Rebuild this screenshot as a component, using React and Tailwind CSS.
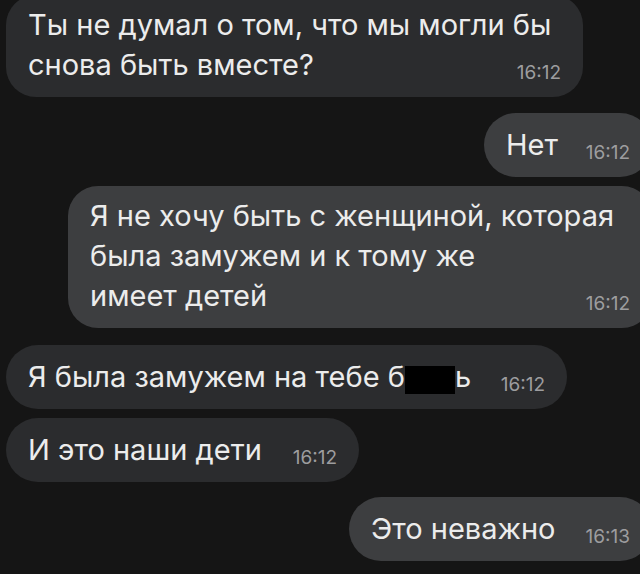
import React from "react";

const font = { fontFamily: "Inter, Roboto, 'Noto Sans', sans-serif" };

function Time({ t }) {
  return (
    <span className="shrink-0 text-[19px] leading-[19px] mb-[3px] text-[#9d9d9f] whitespace-nowrap">
      {t}
    </span>
  );
}

export default function App() {
  return (
    <div
      className="w-[640px] h-[574px] overflow-hidden bg-[#151515] text-[#ececec] text-[29px] leading-[40px] flex flex-col"
      style={font}
    >
      {/* 1 incoming, two lines */}
      <div className="mt-[-5px] ml-[6px] w-[577px] rounded-[30px] bg-[#2b2c2e] pl-[22px] pr-[22px] pt-[10px] pb-[12px] flex flex-col">
        <div className="whitespace-nowrap">Ты не думал о том, что мы могли бы</div>
        <div className="flex items-end justify-between">
          <span className="whitespace-nowrap">снова быть вместе?</span>
          <Time t="16:12" />
        </div>
      </div>

      {/* 2 outgoing */}
      <div className="mt-[16px] self-end mr-[-12px] w-[168px] rounded-[32px] bg-[#3d3e40] px-[22px] py-[12px] flex items-end justify-between">
        <span className="whitespace-nowrap">Нет</span>
        <Time t="16:12" />
      </div>

      {/* 3 outgoing, three lines */}
      <div className="mt-[9px] self-end mr-[-12px] w-[584px] rounded-[30px] bg-[#3d3e40] pl-[22px] pr-[22px] pt-[10px] pb-[12px] flex flex-col">
        <div className="whitespace-nowrap">Я не хочу быть с женщиной, которая</div>
        <div className="whitespace-nowrap">была замужем и к тому же</div>
        <div className="flex items-end justify-between">
          <span className="whitespace-nowrap">имеет детей</span>
          <Time t="16:12" />
        </div>
      </div>

      {/* 4 incoming */}
      <div className="mt-[17px] ml-[6px] w-[561px] rounded-[32px] bg-[#2b2c2e] px-[22px] py-[12px] flex items-end justify-between">
        <span className="whitespace-nowrap">
          Я была замужем на тебе б
          <span className="inline-block w-[50px] h-[28px] bg-black align-[-7px]" />
          ь
        </span>
        <Time t="16:12" />
      </div>

      {/* 5 incoming */}
      <div className="mt-[9px] ml-[6px] w-[353px] rounded-[32px] bg-[#2b2c2e] px-[22px] py-[12px] flex items-end justify-between">
        <span className="whitespace-nowrap">И это наши дети</span>
        <Time t="16:12" />
      </div>

      {/* 6 outgoing */}
      <div className="mt-[15px] self-end mr-[-12px] w-[303px] rounded-[32px] bg-[#3d3e40] px-[22px] py-[12px] flex items-end justify-between">
        <span className="whitespace-nowrap">Это неважно</span>
        <Time t="16:13" />
      </div>
    </div>
  );
}
